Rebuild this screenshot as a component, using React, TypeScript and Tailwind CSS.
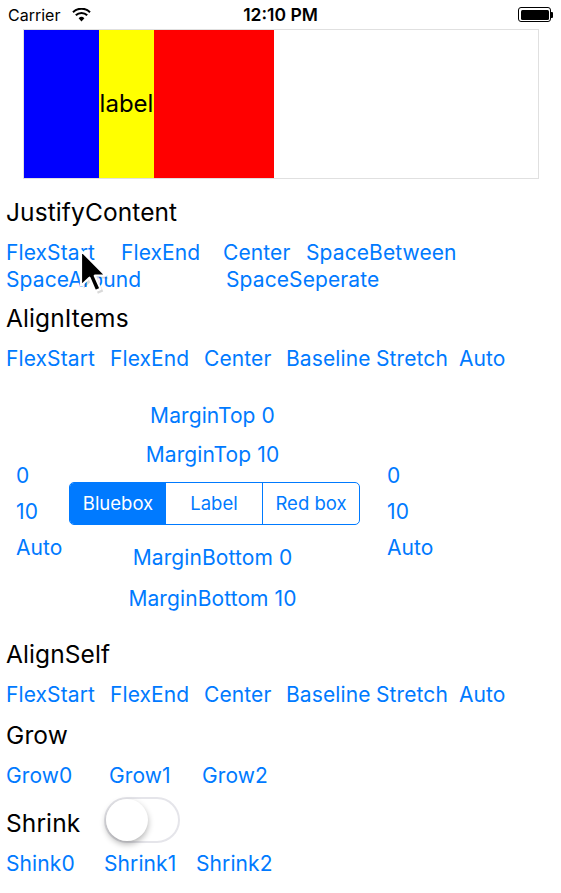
import React, { useState } from 'react';

const BLUE = 'text-[#007aff]';

const Btn = ({ label, w }: { label: string; w?: string }) => (
  <div className={`${w ?? ''} shrink-0 ${BLUE} text-[21px] tracking-[0.1px] leading-[26px] whitespace-nowrap`}>{label}</div>
);

const Title = ({ children, className = '' }: { children: React.ReactNode; className?: string }) => (
  <div className={`text-[24.5px] tracking-[0.1px] leading-[30px] text-black pl-[6px] ${className}`}>{children}</div>
);

const StatusBar = () => (
  <div className="h-[29px] flex items-center justify-between px-[8px] relative text-black">
    <div className="flex items-center gap-[12px]">
      <span className="text-[16px] leading-none">Carrier</span>
      <svg width="19" height="14" viewBox="0 0 19 14">
        <path d="M9.5 13.5 L6.6 10.2 A4.2 4.2 0 0 1 12.4 10.2 Z" fill="#000" />
        <path d="M3.8 7.3 A8 8 0 0 1 15.2 7.3" stroke="#000" strokeWidth="2" fill="none" />
        <path d="M1 4.2 A12 12 0 0 1 18 4.2" stroke="#000" strokeWidth="2" fill="none" />
      </svg>
    </div>
    <span className="absolute left-1/2 -translate-x-1/2 text-[17.5px] font-semibold leading-none">12:10 PM</span>
    <div className="flex items-center">
      <div className="w-[33px] h-[15px] rounded-[3px] border border-black p-[1.5px]">
        <div className="w-full h-full bg-black rounded-[1.5px]" />
      </div>
      <div className="w-[2px] h-[6px] bg-black rounded-r-[1px]" />
    </div>
  </div>
);

const Cursor = () => (
  <svg className="absolute left-[77px] top-[247px]" width="32" height="49" viewBox="-1 -1 14 22">
    <path d="M0.6 0.6 L0.6 16.4 L4.4 12.8 L7 18.8 L9.4 17.8 L6.8 11.9 L11.8 11.9 Z" fill="#000" fillOpacity="0.15" transform="translate(1.2 1.2)" />
    <path d="M0.6 0.6 L0.6 16.4 L4.4 12.8 L7 18.8 L9.4 17.8 L6.8 11.9 L11.8 11.9 Z" fill="#000" stroke="#fff" strokeWidth="1" strokeLinejoin="round" />
  </svg>
);

const Segmented = () => (
  <div className="h-[43px] w-[291px] flex rounded-[5px] border border-[#007aff] overflow-hidden text-[18.5px]">
    <div className="flex-1 flex items-center justify-center bg-[#007aff] text-white">Bluebox</div>
    <div className="flex-1 flex items-center justify-center text-[#007aff] border-r border-[#007aff]">Label</div>
    <div className="flex-1 flex items-center justify-center text-[#007aff]">Red box</div>
  </div>
);

const Switch = () => {
  const [on, setOn] = useState(false);
  return (
    <button
      onClick={() => setOn(!on)}
      className={`w-[76px] h-[46px] rounded-full border-2 ${on ? 'bg-[#4cd964] border-[#4cd964]' : 'bg-white border-[#e5e5ea]'} relative`}
    >
      <span
        className={`absolute top-[0px] ${on ? 'left-[30px]' : 'left-[0px]'} w-[42px] h-[42px] rounded-full bg-white shadow-[0_3px_6px_rgba(0,0,0,0.3)]`}
      />
    </button>
  );
};

const AlignRow = () => (
  <div className="flex pl-[6px] h-[26px]">
    <Btn label="FlexStart" w="w-[104px]" />
    <Btn label="FlexEnd" w="w-[94px]" />
    <Btn label="Center" w="w-[82px]" />
    <Btn label="Baseline" w="w-[90px]" />
    <Btn label="Stretch" w="w-[83px]" />
    <Btn label="Auto" />
  </div>
);

export default function App() {
  return (
    <div className="w-[561px] h-[893px] bg-white relative overflow-hidden font-['Inter',sans-serif]">
      <StatusBar />

      <div className="ml-[23px] w-[516px] h-[150px] border border-[#e0e0e0] flex">
        <div className="w-[75px] h-full bg-[#0000ff]" />
        <div className="w-[55px] h-full bg-[#ffff00] flex items-center justify-center text-[24px] text-black">label</div>
        <div className="w-[120px] h-full bg-[#ff0000]" />
      </div>

      <Title className="mt-[18px]">JustifyContent</Title>
      <div className="flex pl-[6px] mt-[13px] h-[26px]">
        <Btn label="FlexStart" w="w-[115px]" />
        <Btn label="FlexEnd" w="w-[102px]" />
        <Btn label="Center" w="w-[83px]" />
        <Btn label="SpaceBetween" />
      </div>
      <div className="flex pl-[6px] mt-[1px] h-[26px]">
        <Btn label="SpaceAround" w="w-[220px]" />
        <Btn label="SpaceSeperate" />
      </div>

      <Title className="mt-[10px]">AlignItems</Title>
      <div className="mt-[13px]">
        <AlignRow />
      </div>

      <div className="flex">
        <div className="w-[69px] pl-[16px] pt-[91px] flex flex-col gap-[10px]">
          <Btn label="0" />
          <Btn label="10" />
          <Btn label="Auto" />
        </div>
        <div className="w-[291px] pr-[4px] flex flex-col items-center">
          <div className="mt-[31px] h-[26px] flex items-center"><Btn label="MarginTop 0" /></div>
          <div className="mt-[13px] h-[26px] flex items-center"><Btn label="MarginTop 10" /></div>
          <div className="mt-[14px] -mr-[4px]"><Segmented /></div>
          <div className="mt-[20px] h-[26px] flex items-center"><Btn label="MarginBottom 0" /></div>
          <div className="mt-[15px] h-[26px] flex items-center"><Btn label="MarginBottom 10" /></div>
        </div>
        <div className="pl-[27px] pt-[91px] flex flex-col gap-[10px]">
          <Btn label="0" />
          <Btn label="10" />
          <Btn label="Auto" />
        </div>
      </div>

      <Title className="mt-[27px]">AlignSelf</Title>
      <div className="mt-[13px]">
        <AlignRow />
      </div>

      <Title className="mt-[12px]">Grow</Title>
      <div className="flex pl-[6px] mt-[13px] h-[26px]">
        <Btn label="Grow0" w="w-[103px]" />
        <Btn label="Grow1" w="w-[93px]" />
        <Btn label="Grow2" />
      </div>

      <div className="flex items-center mt-[8px] h-[46px]">
        <Title className="w-[104px] pt-[6px]">Shrink</Title>
        <Switch />
      </div>
      <div className="flex pl-[6px] mt-[8px] h-[26px]">
        <Btn label="Shink0" w="w-[98px]" />
        <Btn label="Shrink1" w="w-[92px]" />
        <Btn label="Shrink2" />
      </div>

      <Cursor />
    </div>
  );
}
